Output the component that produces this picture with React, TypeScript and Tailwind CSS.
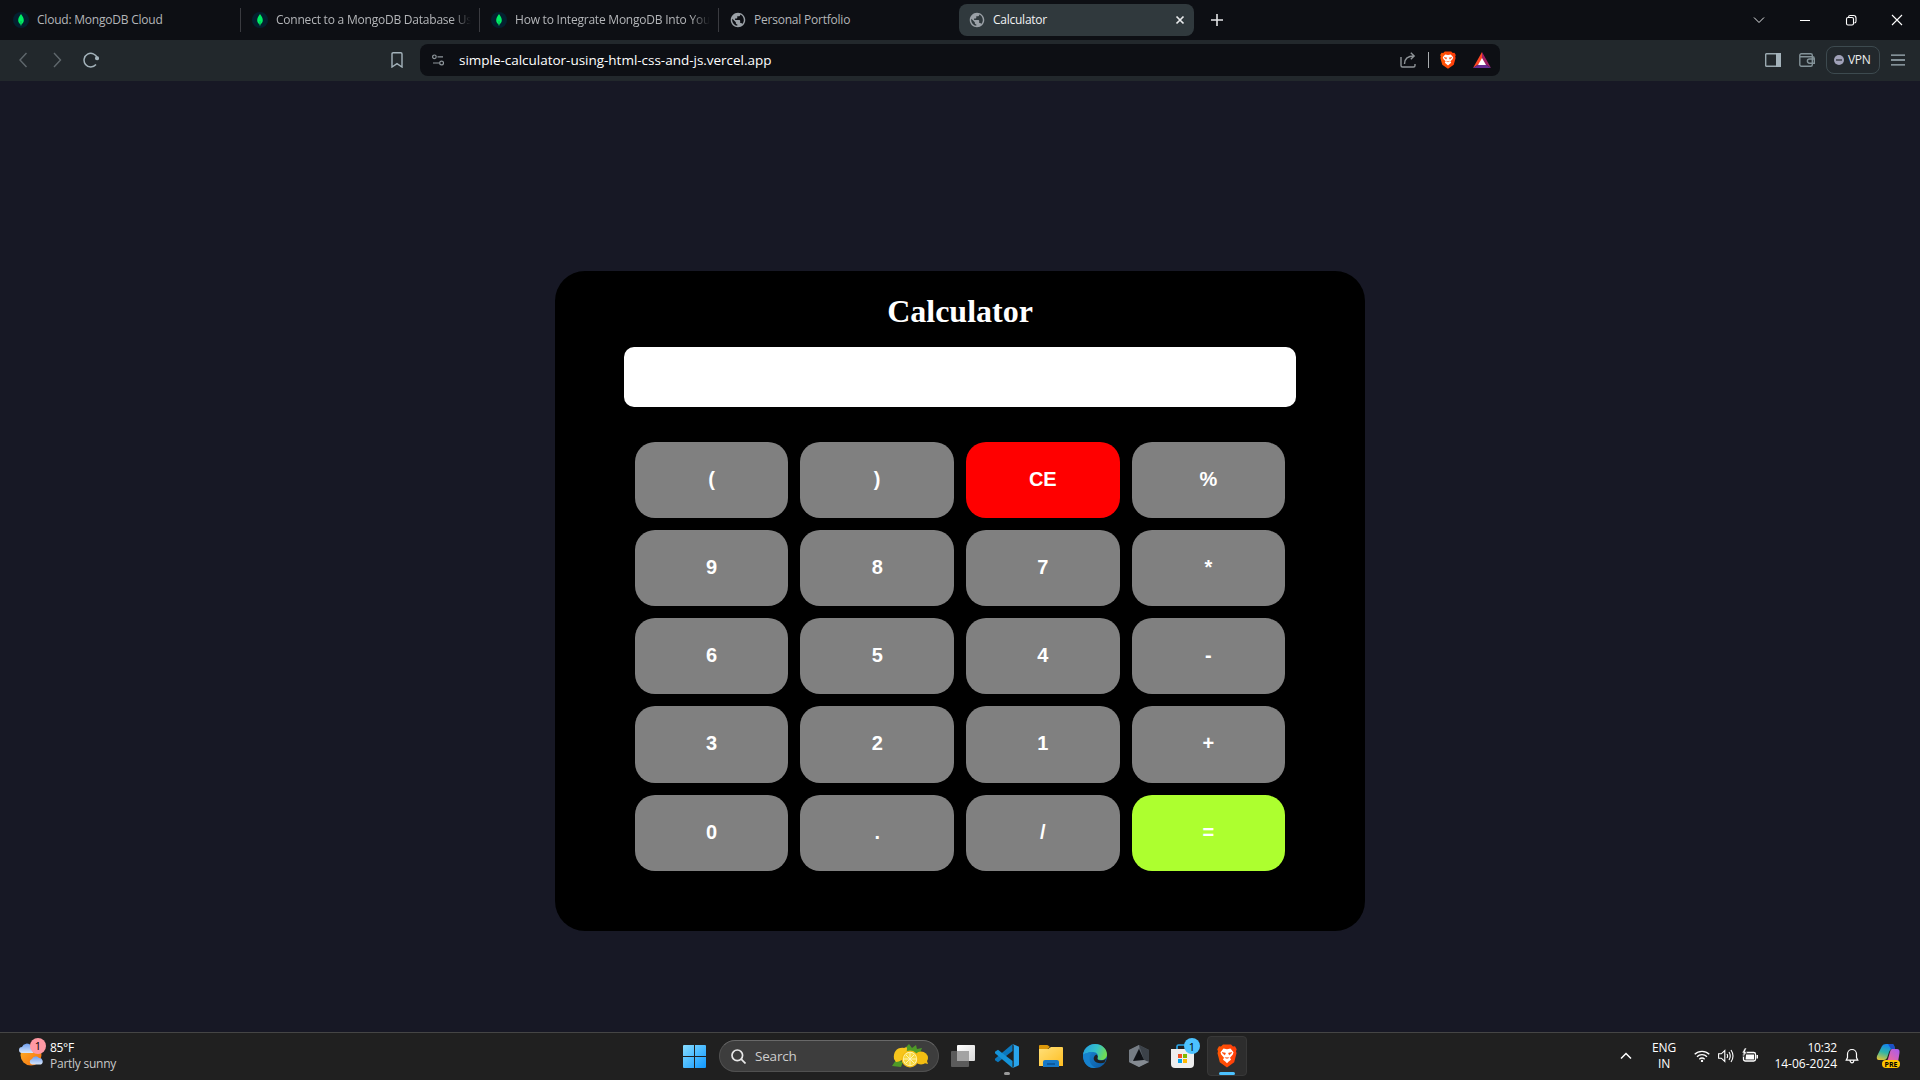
import React from "react";

const ui = "font-['Open_Sans','Noto_Sans',sans-serif]";

function MongoIcon() {
  return (
    <svg className="size-4 shrink-0" viewBox="0 0 16 16">
      <circle cx="8" cy="8" r="8" fill="#04202f" />
      <path d="M8 2C6.200 4.500 5.200 6.300 5.200 8.300c0 2 1.200 3.300 2.400 4.300L8 14l.4-1.400c1.200-1 2.400-2.300 2.400-4.300C10.800 6.300 9.800 4.500 8 2z" fill="#00ed64" />
      <path d="M8 9v4.500" stroke="#08a04b" strokeWidth=".7" />
    </svg>
  );
}

function GlobeIcon() {
  return (
    <svg className="size-4 shrink-0" viewBox="1 1 22 22" fill="#9aa0a6">
      <path d="M12 2C6.480 2 2 6.480 2 12s4.480 10 10 10 10-4.480 10-10S17.520 2 12 2zm-1 17.930c-3.950-.49-7-3.850-7-7.930 0-.62.080-1.210.210-1.790L9 15v1c0 1.100.9 2 2 2v1.930zm6.900-2.540c-.26-.81-1-1.390-1.900-1.390h-1v-3c0-.55-.45-1-1-1H8v-2h2c.55 0 1-.45 1-1V7h2c1.100 0 2-.9 2-2v-.41c2.930 1.190 5 4.060 5 7.410 0 2.080-.8 3.970-2.100 5.390z" />
    </svg>
  );
}

function BraveLion({ className }: { className: string }) {
  return (
    <svg className={className} viewBox="0 0 20 24" preserveAspectRatio="none">
      <defs>
        <linearGradient id="lion" x1="0" x2="1">
          <stop offset="0" stopColor="#ff5601" />
          <stop offset="1" stopColor="#ff3d0c" />
        </linearGradient>
      </defs>
      <path d="M6 .5h8l2 2 2-.2 1.700 3-.7 2 .5 2-2.300 9L10 23.600 2.800 18.300.5 9.300l.5-2-.7-2 1.700-3 2 .2z" fill="url(#lion)" />
      <path d="M6.500 4.500 10 5.200l3.500-.7 3 3.700-.7 2.300-2.800 3.200 1 2-2.300 1.800-1.700 1.700-1.700-1.700L6 15.700l1-2-2.800-3.200-.7-2.300z" fill="#fff" />
      <path d="M5 8.500 8.500 9l-.8 2zM15 8.500 11.500 9l.8 2zM7.800 13.600l2.200.8 2.200-.8" fill="#ff4b08" stroke="#ff4b08" strokeWidth=".5" />
    </svg>
  );
}

function Tab({ title, icon, last, fade }: { title: string; icon: React.ReactNode; last?: boolean; fade?: boolean }) {
  return (
    <div className="flex h-full w-[239px] items-center">
      <div className="flex min-w-0 flex-1 items-center gap-2 pl-[11px] pr-2">
        {icon}
        <span className={`min-w-0 flex-1 whitespace-nowrap text-xs tracking-[-0.22px] text-[#b4b6b9] ${fade ? "[mask-image:linear-gradient(to_right,#000_90%,transparent)]" : ""}`}>{title}</span>
      </div>
      <div className={last ? "w-px" : "h-6 w-px bg-[#3a3b40]"} />
    </div>
  );
}

function TabStrip() {
  return (
    <div className="flex h-10 items-center bg-[#0d0f14] pl-[2px]">
      <Tab title="Cloud: MongoDB Cloud" icon={<MongoIcon />} />
      <Tab title="Connect to a MongoDB Database Us" icon={<MongoIcon />} fade />
      <Tab title="How to Integrate MongoDB Into You" icon={<MongoIcon />} fade />
      <Tab title="Personal Portfolio" icon={<GlobeIcon />} last />
      <div className="ml-px flex h-8 w-[235px] items-center rounded-lg bg-[#30393d] pl-[10px] pr-[8px]">
        <GlobeIcon />
        <span className="ml-2 flex-1 text-xs tracking-[-0.25px] text-[#f1f2f3]">Calculator</span>
        <svg className="size-3" viewBox="0 0 12 12"><path d="m2.500 2.500 7 7m0-7-7 7" stroke="#e8eaec" strokeWidth="1.700" /></svg>
      </div>
      <svg className="ml-[17px] size-3" viewBox="0 0 12 12"><path d="M6 0v12M0 6h12" stroke="#e3e5e7" strokeWidth="1.600" /></svg>
      <div className="flex flex-1 items-center justify-end gap-[34px] pr-[17px]">
        <svg className="size-3" viewBox="0 0 12 12" fill="none" stroke="#e3e5e7"><path d="m1 3.500 5 5 5-5" /></svg>
        <svg className="size-3" viewBox="0 0 12 12"><path d="M1 6.500h10" stroke="#fff" /></svg>
        <svg className="size-3" viewBox="0 0 12 12" fill="none" stroke="#fff" strokeWidth="1.100"><rect x="1.500" y="3.500" width="7" height="7.500" rx="1.500" /><path d="M3.500 3.200c0-1 .6-1.700 1.700-1.700h3.300c1.500 0 2.500 1 2.500 2.500v3.300c0 1-.7 1.700-1.700 1.700" /></svg>
        <svg className="size-3" viewBox="0 0 12 12"><path d="m1 1 10 10m0-10L1 11" stroke="#fff" strokeWidth="1.100" /></svg>
      </div>
    </div>
  );
}

function Toolbar() {
  return (
    <div className="flex h-[41px] items-center bg-[#22282c] pb-px pl-[15px]">
      <svg className="h-4 w-4" viewBox="0 0 16 16" fill="none" stroke="#60686d" strokeWidth="1.400"><path d="M11.500 1 5 8l6.500 7" /></svg>
      <svg className="ml-[18px] h-4 w-4" viewBox="0 0 16 16" fill="none" stroke="#60686d" strokeWidth="1.400"><path d="m5 1 6.500 7L5 15" /></svg>
      <svg className="ml-[18px] h-4 w-4" viewBox="0 0 16 16" fill="none" stroke="#a4b3bb" strokeWidth="1.500"><path d="M14.300 6A6.800 6.800 0 1 0 13 12.600" /><circle cx="14" cy="6.300" r="1.300" fill="#a4b3bb" /></svg>
      <svg className="ml-[292px] h-4 w-3" viewBox="0 0 12 16" fill="none" stroke="#a4b3bb" strokeWidth="1.400"><path d="M1 15V2q0-1.200 1.200-1.200h7.600Q11 .8 11 2v13l-5-3.300z" /></svg>
      <div className="ml-[17px] flex h-8 w-[1080px] items-center rounded-lg bg-[#0d0f14] pl-3">
        <svg className="size-3" viewBox="0 0 12 12" fill="none" stroke="#8f979c" strokeWidth="1.200"><circle cx="2.400" cy="2.800" r="1.800" /><path d="M5.500 2.800H11M1 9h6" /><circle cx="9.600" cy="9" r="1.900" /></svg>
        <span className="ml-[15px] flex-1 text-[13.500px] tracking-[-0.02px] text-white">simple-calculator-using-html-css-and-js.vercel.app</span>
        <svg className="size-4" viewBox="0 0 16 16" fill="none" stroke="#8f9498" strokeWidth="1.400"><path d="M1 5v8.500q0 1.500 1.500 1.500h11q1.500 0 1.500-1.500V12M4.500 12C4.500 7 7 4 14 4M10.800.8 14.200 4l-3.400 3.300" /></svg>
        <div className="ml-3 h-4 w-px bg-[#a9adb0]" />
        <BraveLion className="ml-[11px] h-[18px] w-4" />
        <svg className="ml-[17px] mr-[9px] h-4 w-[18px]" viewBox="0 0 18 16"><path d="M9 0 0 16l9-6z" fill="#ff4724" /><path d="m9 0 9 16-9-6z" fill="#9e1f63" /><path d="M0 16h18l-9-6z" fill="#662d91" /><path d="m9 6-4 7h8z" fill="#fff" /></svg>
      </div>
      <div className="flex flex-1 items-center justify-end pr-[15px]">
        <svg className="h-[14px] w-4" viewBox="0 0 16 14"><rect x=".7" y=".7" width="14.600" height="12.600" rx=".6" fill="none" stroke="#9aa9b0" strokeWidth="1.400" /><path d="M11 0h5v14h-5z" fill="#a4b3bb" /></svg>
        <svg className="ml-[18px] h-[14px] w-4" viewBox="0 0 16 14" fill="none" stroke="#839298" strokeWidth="1.400"><rect x=".8" y=".8" width="12.500" height="12.500" rx="1.500" /><path d="M1 3.800h12.500q1.700 0 1.700 1.500V6M15.300 6H10.500a2 2 0 0 0 0 4.200h4.800z" /></svg>
        <div className="ml-[11px] flex h-7 w-[54px] items-center rounded-lg border border-[#3d4a4f] pl-[7px]">
          <svg className="size-[10px]" viewBox="0 0 10 10"><circle cx="5" cy="5" r="5" fill="#a0a1b8" /><path d="M2 5h6" stroke="#22282c" strokeWidth="1.200" /></svg>
          <span className="ml-1 pb-px text-xs font-medium leading-4 tracking-[-0.3px] text-[#eceeef]">VPN</span>
        </div>
        <svg className="ml-[11px] h-3 w-[14px]" viewBox="0 0 14 12"><path d="M0 1.200h14M0 6h14M0 10.800h14" stroke="#a4b3bb" strokeWidth="1.300" /></svg>
      </div>
    </div>
  );
}

const keys = ["(", ")", "CE", "%", "9", "8", "7", "*", "6", "5", "4", "-", "3", "2", "1", "+", "0", ".", "/", "="];

function keyColor(k: string) {
  if (k === "CE") return "bg-[#ff0000]";
  if (k === "=") return "bg-[#adff2f]";
  return "bg-[#808080]";
}

function Calculator() {
  return (
    <main className="flex h-[951px] items-start justify-center bg-[#171825] pt-[190px]">
      <section className="flex h-[660px] w-[810px] flex-col items-center rounded-[30px] bg-black">
        <h1 className="mt-[22px] font-['Liberation_Serif',serif] text-[32px] font-bold leading-[37px] text-white">Calculator</h1>
        <input readOnly className="mt-[17px] h-[60px] w-[672px] rounded-[10px] bg-white outline-none" />
        <div className="mt-[34.600px] grid h-[429.250px] w-[650.400px] grid-cols-4 grid-rows-5 gap-3">
          {keys.map((k) => (
            <button key={k} className={`rounded-[20px] pb-[2px] font-['Liberation_Sans',sans-serif] text-[20px] font-bold leading-none text-white ${keyColor(k)}`}>{k}</button>
          ))}
        </div>
      </section>
    </main>
  );
}

function WeatherIcon() {
  return (
    <svg className="h-6 w-[26px]" viewBox="0 0 26 24">
      <defs><linearGradient id="sun" x1="0" y1="0" x2="1" y2="1"><stop offset="0" stopColor="#ffb72b" /><stop offset="1" stopColor="#f56b0c" /></linearGradient>
        <linearGradient id="cloud" x1="0" y1="0" x2="0" y2="1"><stop offset="0" stopColor="#6f9ff0" /><stop offset="1" stopColor="#d7e6fb" /></linearGradient></defs>
      <circle cx="12" cy="12" r="10.500" fill="url(#sun)" />
      <path d="M3 10a3 3 0 0 1 0-6 5 5 0 0 1 9-1 4 4 0 0 1 2 7z" fill="url(#cloud)" />
      <path d="M13 21.500a2.800 2.800 0 0 1 0-5.500 4 4 0 0 1 7-1 3.500 3.500 0 0 1 2 6.500z" fill="url(#cloud)" />
    </svg>
  );
}

function Lemons() {
  return (
    <svg className="h-6 w-9" viewBox="0 0 36 24">
      <path d="M12 5 17 0l3 4 4-3 1 4 5-1-2 5H14zM0 22l4-6 7 2-2 5z" fill="#4f9a27" />
      <path d="M2 15C1 8 5 3 12 4c2-1 3-1 3 0 0 8-3 13-11 14z" fill="#f7c51c" />
      <ellipse cx="29" cy="14" rx="7" ry="6.500" fill="#f4bd12" />
      <path d="m34 14 2 6-4-1z" fill="#f4bd12" />
      <circle cx="18" cy="15" r="8.500" fill="#f2bc13" />
      <circle cx="18" cy="15" r="7.200" fill="#fff3b0" />
      <circle cx="18" cy="15" r="6.200" fill="#f8d83b" />
      <path d="M18 9v12M12 15h12M14 11l8 8m0-8-8 8" stroke="#fff6c2" strokeWidth=".9" />
    </svg>
  );
}

function Taskbar() {
  return (
    <footer className="grid h-12 grid-cols-[683px_1fr_310px] items-center border-t border-[#454545] bg-[#202020] pb-px">
      <div className="flex h-full items-center pl-[19px]">
        <div className="relative -mt-[3px]">
          <WeatherIcon />
          <span className="absolute -top-[5px] left-[11px] flex size-4 items-center justify-center rounded-full bg-[#ff99a4] text-[11px] leading-none text-black">1</span>
        </div>
        <div className="ml-[5px] text-xs leading-4 text-white">
          <div className="tracking-[-0.3px]">85°F</div>
          <div className="tracking-[-0.25px] text-[#c9c9c9]">Partly sunny</div>
        </div>
      </div>
      <div className="flex h-full items-center">
        <svg className="size-[23px]" viewBox="0 0 23 23">
          <defs><linearGradient id="win" x1="0" y1="0" x2="1" y2="1" gradientUnits="objectBoundingBox"><stop offset="0" stopColor="#86dcff" /><stop offset="1" stopColor="#0f98ff" /></linearGradient></defs>
          <path d="M1 0h10v11H0V1q0-1 1-1zM12 0h10q1 0 1 1v10H12zM0 12h11v11H1q-1 0-1-1zM12 12h11v10q0 1-1 1H12z" fill="url(#win)" />
        </svg>
        <div className="ml-[13px] flex h-8 w-[220px] items-center rounded-full border border-[#505050] border-t-[#686868] bg-[#3d3d3d] pl-[11px] pr-[10px]">
          <svg className="size-[15px]" viewBox="0 0 15 15" fill="none" stroke="#e8e8e8" strokeWidth="1.700"><circle cx="6.300" cy="6.300" r="5.300" /><path d="m10.200 10.200 4.300 4.300" /></svg>
          <span className="ml-[9px] flex-1 text-[13.500px] tracking-[-0.2px] text-[#cdcdcd]">Search</span>
          <Lemons />
        </div>
        <svg className="ml-3 h-[22px] w-6" viewBox="0 0 24 22">
          <defs><linearGradient id="tv" x1="0" y1="0" x2="1" y2="1"><stop offset="0" stopColor="#fff" /><stop offset="1" stopColor="#d9d9d9" /></linearGradient></defs>
          <rect x="6" width="18" height="16" rx="1" fill="url(#tv)" /><rect y="6" width="18" height="16" rx="1" fill="#5b5b5b" /><path d="M6 6h12v10H6z" fill="#a3a3a3" />
        </svg>
        <div className="relative ml-5">
          <svg className="size-6" viewBox="0 0 24 24">
            <path d="M17.500 0v7L3 18.300 0 16.200v-1.500z" fill="#0b78bd" />
            <path d="M17.500 24v-7L3 5.700 0 7.800v1.500z" fill="#1593d8" />
            <path d="m17.500 0 6 2.500q.5.200.5.900v17.200q0 .7-.5.900l-6 2.500q1.200-.8 1.200-2V2q0-1.200-1.200-2z" fill="#29a5ed" />
          </svg>
          <div className="absolute left-[9px] top-[28px] h-[3px] w-1.5 rounded-full bg-[#9a9a9a]" />
        </div>
        <svg className="ml-5 h-[22px] w-6" viewBox="0 0 24 22">
          <defs><linearGradient id="folder" x1="0" y1="0" x2="1" y2="1"><stop offset="0" stopColor="#ffe07a" /><stop offset="1" stopColor="#ffbe21" /></linearGradient></defs>
          <path d="M0 4h9l3-2h11q1 0 1 1v18H0z" fill="url(#folder)" /><path d="M0 4V1q0-1 1-1h7q1 0 1.500.8L11 2 8.500 4z" fill="#dc980a" />
          <path d="M4 22v-5q0-2 2-2h12q2 0 2 2v5z" fill="#1678c7" /><path d="M8 18h8v2H8z" fill="#0d5a9e" />
        </svg>
        <svg className="ml-5 size-6" viewBox="0 0 24 24">
          <defs><linearGradient id="edgeTop" x1="0" y1=".2" x2="1" y2=".5"><stop offset="0" stopColor="#249fe0" /><stop offset=".55" stopColor="#35c1c8" /><stop offset="1" stopColor="#72dd4e" /></linearGradient>
            <linearGradient id="edgeLow" x1="0" y1="0" x2="1" y2="1"><stop offset="0" stopColor="#1b8fd9" /><stop offset="1" stopColor="#0c559f" /></linearGradient></defs>
          <circle cx="12" cy="12" r="12" fill="url(#edgeLow)" />
          <path d="M0 11C1 4 6 0 12 0c7 0 12 5 12 10.500 0 3.500-2.500 5.500-6 5.500-3 0-4-1-3.500-2 1.500-2.500-.5-6-4.500-6-5 0-9 2-10 3z" fill="url(#edgeTop)" />
          <path d="M14.500 14c-.5 1 .5 2.500 3.500 2.500 2.500 0 4-1 5-2l-1.500 4c-3 1.500-9 1-10.500-2.500-1-2.500 1-5 2.500-5.500q2 1.500 1 3.500z" fill="#202020" />
          <path d="M10 8c-5 2-5 13 3 15.900C3 25 0 17 0 11c1-1 5-3 10-3z" fill="#1681cd" />
        </svg>
        <svg className="ml-[22px] h-[22px] w-5" viewBox="0 0 20 22"><path d="m10 0 10 5v12l-10 5-10-5V5z" fill="#596069" /><path d="M10 0v3L4 16l-4 1V5z" fill="#767d85" /><path d="m10 0 10 5v12l-5-2z" fill="#3c4249" /><path d="m0 17 4-2h11l5 2-10 5z" fill="#858b92" /><path d="m10 4 5 11-11 1z" fill="#101216" /></svg>
        <div className="relative ml-[22px]">
          <svg className="h-6 w-[23px]" viewBox="0 0 23 24"><path d="M6 8V2.500Q6 1 7.500 1h8Q17 1 17 2.500V8" fill="none" stroke="#2aa8ec" strokeWidth="1.600" /><path d="M0 5h23v15q0 4-4 4H4q-4 0-4-4z" fill="#eee" /><path d="M7 10h4v4H7z" fill="#f25022" /><path d="M12 10h4v4h-4z" fill="#7fba00" /><path d="M7 15h4v4H7z" fill="#00a4ef" /><path d="M12 15h4v4h-4z" fill="#ffb900" /></svg>
          <span className="absolute -top-[6px] left-[13px] flex size-4 items-center justify-center rounded-full bg-[#4cc2ff] text-[11px] leading-none text-black">1</span>
        </div>
        <div className="relative ml-[13px] flex size-10 items-center justify-center rounded border border-[#383838] bg-[#2d2d2d]">
          <BraveLion className="h-6 w-5" />
          <div className="absolute bottom-0 h-[3px] w-4 rounded-full bg-[#4cc2ff]" />
        </div>
      </div>
      <div className="flex h-full items-center text-xs leading-4 text-white">
        <svg className="ml-[10px] size-3" viewBox="0 0 12 12" fill="none" stroke="#fff" strokeWidth="1.500"><path d="m1 8.500 5-5 5 5" /></svg>
        <div className="ml-5 w-6 text-center tracking-[-0.2px]"><div>ENG</div><div>IN</div></div>
        <svg className="ml-[18px] size-4" viewBox="0 0 16 16" fill="none" stroke="#fff" strokeWidth="1.300"><path d="M.7 6.300a10.500 10.500 0 0 1 14.600 0M3 8.800a7 7 0 0 1 10 0M5.300 11.200a4 4 0 0 1 5.400 0" /><circle cx="8" cy="12.900" r="1.200" fill="#fff" stroke="none" /></svg>
        <svg className="ml-2 size-4" viewBox="0 0 16 16" fill="none" stroke="#fff" strokeWidth="1.100"><path d="M.6 5.800h2.700l3.500-3.300v11L3.300 10.200H.6zM9 6q1.200 2 0 4M11 4q2.500 4 0 8M13 2q4 6 0 12" /></svg>
        <svg className="ml-2 size-4" viewBox="0 0 16 16"><rect x="1.500" y="4.500" width="12" height="8.500" rx="1.800" fill="none" stroke="#fff" strokeWidth="1.300" /><path d="M4 6.500h8v5H3.500zM14.500 7H16v3.500h-1.500z" fill="#fff" /><path d="M2.700 0 0 5h2L1 9l4-5H3L4.500 0z" fill="#fff" stroke="#202020" strokeWidth=".5" /></svg>
        <div className="ml-4 w-[63px] whitespace-nowrap text-right"><div className="tracking-[-0.2px]">10:32</div><div>14-06-2024</div></div>
        <svg className="ml-2 h-4 w-[14px]" viewBox="0 0 14 16" fill="none" stroke="#fff" strokeWidth="1.200"><path d="M2.500 6a4.500 4.500 0 0 1 9 0v3.500l1.300 2.700H1.200l1.300-2.700zM5 12.500q.3 2.300 2 2.300t2-2.300" /></svg>
        <div className="relative ml-[17px]">
          <svg className="size-6" viewBox="0 0 24 24"><defs><linearGradient id="copA" x1=".3" y1="0" x2="0" y2="1"><stop offset="0" stopColor="#1689e8" /><stop offset=".45" stopColor="#2fb5a8" /><stop offset="1" stopColor="#f5c52a" /></linearGradient><linearGradient id="copB" x1="1" y1="0" x2="0" y2="1"><stop offset="0" stopColor="#a55bf4" /><stop offset="1" stopColor="#ff6b86" /></linearGradient></defs><path d="M6 2Q7 0 10 0h6q2 0 2.500 3L19 5h-3q-2 0-3 3l-2 6q-1 2-3 2H3q-3 0-2-4z" fill="url(#copA)" /><path d="M12 0h4q2 0 2.500 3L19 5h-4z" fill="#1c4fc4" /><path d="M16 5h5q3 0 2.500 4L22 18H9q2 0 3-3l2-7q.6-3 2-3z" fill="url(#copB)" /></svg>
          <span className="absolute left-[6px] top-4 flex h-2 w-[18px] items-center justify-center rounded-sm bg-[#ffc400] text-[7px] font-bold leading-none text-black">PRE</span>
        </div>
      </div>
    </footer>
  );
}

export default function App() {
  return (
    <div className={`h-[1080px] w-[1920px] overflow-hidden bg-[#171825] ${ui}`}>
      <TabStrip />
      <Toolbar />
      <Calculator />
      <Taskbar />
    </div>
  );
}
